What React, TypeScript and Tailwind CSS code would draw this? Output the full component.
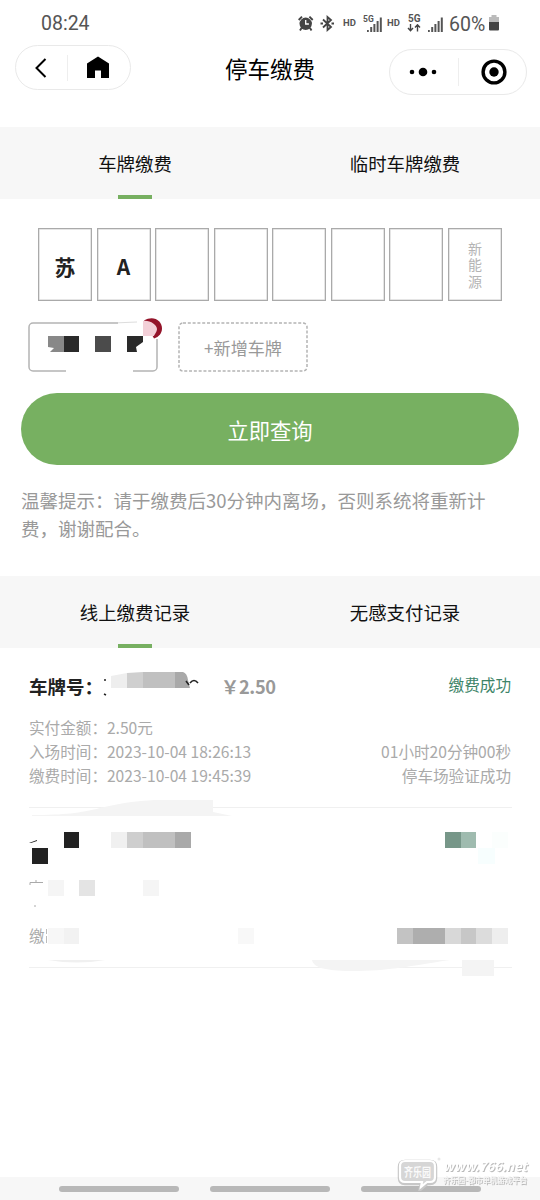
const PLATE = ["苏", "A", "", "", "", "", ""];

interface TabsProps {
  items: string[];
}

function Tabs({ items }: TabsProps) {
  return (
    <div className="flex h-[72px] bg-[#f7f7f7] text-[18.4px] text-[#111]">
      {items.map((label, i) => (
        <div key={label} className="relative flex flex-1 items-center justify-center pt-px">
          {label}
          {i === 0 && <span className="absolute bottom-0 left-[118px] h-[4px] w-[34px] bg-[#77b061]" />}
        </div>
      ))}
    </div>
  );
}

function Signal() {
  return (
    <svg width="15" height="15" viewBox="0 0 15 15" fill="#555">
      <rect x="0" y="13" width="1.8" height="2" />
      <rect x="3.2" y="10" width="2" height="5" />
      <rect x="6.4" y="7" width="2" height="8" />
      <rect x="9.6" y="4" width="2" height="11" />
      <rect x="12.8" y="0.5" width="2" height="14.5" />
    </svg>
  );
}

function StatusBar() {
  return (
    <div className="relative h-[45px] font-[Roboto] text-[#555]">
      <span className="absolute left-[41px] top-[11px] text-[19.5px] leading-[25px]">08:24</span>
      <svg className="absolute left-[298px] top-[15px]" width="16" height="17" viewBox="0 0 16 17">
        <circle cx="7.7" cy="8.800" r="6.2" fill="#444" />
        <path d="M.7 5 4 1.700M11.400 1.700 14.700 5M3.500 13 2 15.500M12 13 13.500 15.500" stroke="#444" strokeWidth="1.900" />
        <path d="M7.700 5v4h3.2" stroke="#fff" strokeWidth="1.3" fill="none" />
      </svg>
      <svg className="absolute left-[320px] top-[15px]" width="15" height="17" viewBox="0 0 15 17" fill="none" stroke="#444" strokeWidth="1.800">
        <path d="M3 4.500 11 12 7.500 15V2L11 5 3 12.500" />
        <path d="M.5 8.500h2.500M11.500 8.500H14" strokeWidth="2" />
      </svg>
      <span className="absolute left-[343px] top-[17px] text-[9.5px] leading-[12px] font-bold">HD</span>
      <span className="absolute left-[363px] top-[14px] text-[8.5px] leading-[10px] font-bold">5G</span>
      <span className="absolute left-[367px] top-[17px]"><Signal /></span>
      <span className="absolute left-[387px] top-[17px] text-[9.5px] leading-[12px] font-bold">HD</span>
      <span className="absolute left-[408px] top-[13px] text-[10px] leading-[12px] font-bold">5G</span>
      <svg className="absolute left-[407px] top-[24px]" width="14" height="8" viewBox="0 0 14 8" fill="none" stroke="#444" strokeWidth="1.4">
        <path d="M3.5 0v6M1 4l2.5 2.700L6 4M10.500 7.500V1M8 3.500l2.500-2.700L13 3.500" />
      </svg>
      <span className="absolute left-[428px] top-[17px]"><Signal /></span>
      <span className="absolute left-[449px] top-[12px] text-[19.500px] leading-[25px]">60%</span>
      <svg className="absolute left-[488px] top-[15px]" width="12" height="16" viewBox="0 0 12 16">
        <path d="M3.500 0h5v2H11v5H1V2h2.500z" fill="#bbb" />
        <path d="M1 7h10v7.500a1 1 0 0 1-1 1H2a1 1 0 0 1-1-1z" fill="#444" />
      </svg>
    </div>
  );
}

function NavBar() {
  return (
    <div className="flex h-[82px] items-start justify-between pl-[15px] pr-[13px]">
      <div className="flex h-[45px] w-[116px] items-center rounded-full border border-[#e9e9e9]">
        <div className="flex h-[26px] w-[52px] items-center justify-center border-r border-[#eee] pr-[2px]">
          <svg width="12" height="20" viewBox="0 0 12 20" fill="none" stroke="#000" strokeWidth="2">
            <path d="M10.500 1 1.500 10l9 9" />
          </svg>
        </div>
        <div className="flex flex-1 justify-center pr-[2px] pb-[2px]">
          <svg width="22" height="22" viewBox="0 0 22 22">
            <path d="M11 .5 22 7.500V22h-8v-7.500H8V22H0V7.500z" />
          </svg>
        </div>
      </div>
      <h1 className="mt-[6px] ml-[20px] text-[22.5px] leading-[34px] text-black">停车缴费</h1>
      <div className="mt-[4px] flex h-[46px] w-[138px] items-center rounded-full border border-[#e9e9e9]">
        <div className="flex h-[28px] w-[69px] items-center justify-center border-r border-[#eee] pr-[2px]">
          <svg width="28" height="10" viewBox="0 0 28 10">
            <circle cx="3" cy="5" r="2.300" />
            <circle cx="14" cy="5" r="4.300" />
            <circle cx="25" cy="5" r="2.300" />
          </svg>
        </div>
        <div className="flex flex-1 justify-center pl-[3px]">
          <svg width="26" height="26" viewBox="0 0 26 26">
            <circle cx="13" cy="13" r="10.900" fill="none" stroke="#000" strokeWidth="3.400" />
            <circle cx="13" cy="13" r="4.700" />
          </svg>
        </div>
      </div>
    </div>
  );
}

// Saved plate with its number blocked out and a delete badge on the corner
function SavedPlate() {
  return (
    <svg className="absolute left-0 top-[-6px]" width="140" height="58" viewBox="28 316 140 58">
      <path d="M118 323H33a4 4 0 0 0-4 4v40a4 4 0 0 0 4 4h33M133 371h20a4 4 0 0 0 4-4v-28" fill="none" stroke="#b4b4b4" strokeWidth="1.500" />
      <path d="M118 322.800 137 322" stroke="#ddd" />
      <path d="M48 336h16v16H50l4-4-6-1z" fill="#888" />
      <path d="M64 336h15v16H64z" fill="#2a2a2a" />
      <path d="M95 336h16v16H95z" fill="#4b4b4b" />
      <path d="M127 336h16v6l-7 5 1 5h-10z" fill="#2a2a2a" />
      <path d="M144 320.500C153 315 162 320 162 328.500C162 333 159 337 154 338.500z" fill="#94142a" />
      <path d="M143 321C150 320 157 325 157 329C157 332 154 335 154 336H143z" fill="#f3d0d8" />
    </svg>
  );
}

function MaskedRecord() {
  return (
    <div className="relative h-[180px]">
      <div className="absolute left-[29px] top-[125px] text-[15.600px] leading-[24px] text-[#aaa]">缴</div>
      <svg className="absolute left-0 top-0" width="540" height="180" viewBox="0 798 540 180">
        <path d="M29 807.500h483M29 967.500h483" stroke="#f0f0f0" />
        <path d="M32 815C65 815 80 813 100 808C125 802 145 800 160 800H213v12L232 816H32z" fill="#f4f4f4" />
        <path d="M29 843 37 840v1l-6 2z" fill="#222" />
        <path d="M64 832h15v16H64zM32 848h16v16H32z" fill="#222" />
        <path d="M111 832h16v16h-16z" fill="#f0f0f0" />
        <path d="M127 832h16v16h-16z" fill="#cecece" />
        <path d="M143 832h32v16h-32z" fill="#c0c0c0" />
        <path d="M175 832h16v16h-16z" fill="#a9a9a9" />
        <path d="M445 832h16v16h-16z" fill="#779789" />
        <path d="M461 832h15v16h-15z" fill="#9fbbaf" />
        <path d="M492 832h16v16h-16z" fill="#fbfefd" />
        <path d="M478 848h17v16h-17z" fill="#f7fefe" />
        <path d="M30 885v-2.500h13M35 881h2M48 881h2M34 906h2" fill="none" stroke="#aaa" />
        <path d="M48 880h16v16H48z" fill="#f5f5f5" />
        <path d="M79 880h16v16H79z" fill="#e4e4e4" />
        <path d="M143 880h16v16h-16z" fill="#f5f5f5" />
        <path d="M46.500 929v5M46.500 936v7" stroke="#bbb" />
        <path d="M48 928h16v16H48z" fill="#f7f7f7" />
        <path d="M64 928h15v16H64z" fill="#f2f2f2" />
        <path d="M238 928h16v16h-16z" fill="#f8f8f8" />
        <path d="M397 928h16v16h-16z" fill="#c3c3c3" />
        <path d="M413 928h32v16h-32z" fill="#aeaeae" />
        <path d="M445 928h16v16h-16z" fill="#d8d8d8" />
        <path d="M461 928h15v16h-15z" fill="#c7c7c7" />
        <path d="M476 928h16v16h-16z" fill="#dcdcdc" />
        <path d="M492 928h16v16h-16z" fill="#eee" />
        <path d="M48 960h57q-28 5-57 0z" fill="#f0f0f0" />
        <path d="M312 960H450C410 966 390 971 350 971C325 971 313 967 312 960zM462 960h32v16h-32z" fill="#f4f4f4" />
      </svg>
    </div>
  );
}

function Watermark() {
  return (
    <div className="absolute bottom-[9px] left-[396px] flex h-[36px] items-center">
      <svg width="46" height="36" viewBox="0 0 46 36">
        <path d="M9 7h25q5 0 5 5v11q0 5-5 5h-3l-6 5 1-5H9q-5 0-5-5V12q0-5 5-5z" fill="none" stroke="#c8c8c8" strokeWidth="4.500" />
        <path d="M9 6h25q5 0 5 5v11q0 5-5 5h-3l-6 5 1-5H9q-5 0-5-5V11q0-5 5-5z" fill="#d6d6d6" stroke="#fff" strokeWidth="2.200" />
        <text x="8" y="21.500" fontSize="12" fontWeight="bold" fill="#fafafa" textLength="27" lengthAdjust="spacingAndGlyphs">齐乐园</text>
        <circle cx="43" cy="4" r="1.500" fill="#e8e8e8" />
      </svg>
      <svg width="92" height="32" viewBox="0 0 92 32" fontWeight="bold" className="drop-shadow-[1px_1px_0.500px_#bbb]">
        <text x="1" y="14" fontSize="13" fontStyle="italic" fill="#fff" textLength="84" lengthAdjust="spacingAndGlyphs">www.766.net</text>
        <text x="1" y="26" fontSize="7.500" fill="#f4f4f4" textLength="84" lengthAdjust="spacingAndGlyphs">齐乐园-都市单机游戏平台</text>
      </svg>
    </div>
  );
}

export default function App() {
  return (
    <div className="relative flex h-[1200px] w-[540px] flex-col overflow-hidden bg-white font-['Noto_Sans_CJK_SC',sans-serif]">
      <StatusBar />
      <NavBar />
      <Tabs items={["车牌缴费", "临时车牌缴费"]} />

      {/* Plate number input */}
      <div className="mt-[29px] flex justify-between px-[38px] text-[21px] font-bold text-[#222]">
        {PLATE.map((char, i) => (
          <div key={i} className="flex h-[73px] w-[54px] items-center justify-center border-[1.5px] border-[#aaa] pt-[5px] shadow-[inset_0_0_0_0.500px_#ccc]">
            {char}
          </div>
        ))}
        <div className="flex h-[73px] w-[54px] flex-col items-center justify-center border-[1.5px] border-[#aaa] text-[14px] leading-[16.5px] font-normal text-[#b4b4b4] shadow-[inset_0_0_0_0.500px_#ccc]">
          <span>新</span>
          <span>能</span>
          <span>源</span>
        </div>
      </div>

      <div className="relative mt-[21px] ml-[28px] flex h-[50px]">
        <SavedPlate />
        <svg className="absolute left-[150px] top-0" width="130" height="50" viewBox="0 0 130 50">
          <rect x="1" y="1" width="128" height="48" rx="4" fill="none" stroke="#b4b4b4" strokeWidth="1.500" strokeDasharray="3 1.800" />
        </svg>
        <div className="ml-[150px] flex w-[130px] items-center justify-center pt-[2px] text-[17.100px] text-[#999]">
          +新增车牌
        </div>
      </div>

      <button className="mx-[21px] mt-[21px] h-[72px] shrink-0 rounded-full bg-[#77b061] pt-px text-[21.300px] text-white">
        立即查询
      </button>
      <p className="mt-[21px] h-[90px] pl-[21px] text-[18.500px] leading-[28px] whitespace-nowrap text-[#999]">
        温馨提示：请于缴费后30分钟内离场，否则系统将重新计
        <br />
        费，谢谢配合。
      </p>

      <Tabs items={["线上缴费记录", "无感支付记录"]} />

      {/* Latest record */}
      <div className="h-[150px] px-[29px] pt-[23px]">
        <div className="relative flex h-[30px] items-center leading-[30px]">
          <b className="text-[18.500px] font-bold text-[#222]">车牌号：</b>
          <svg className="absolute left-[73px] top-0" width="100" height="30" viewBox="102 671 100 30">
            <path d="M104 680h2M104 694l2 1" stroke="#222" strokeWidth="1.500" />
            <path d="M111 676 127 673v15h-16z" fill="#eee" />
            <path d="M127 673 143 672v16h-16z" fill="#cfcfcf" />
            <path d="M143 672h32v16h-32z" fill="#c0c0c0" />
            <path d="M175 672h8q4 1 5 8l2 8h-15z" fill="#a9a9a9" />
            <path d="M186 681l3 4M190 683q4-5 8 0" fill="none" stroke="#222" strokeWidth="1.600" />
          </svg>
          <span className="absolute left-[192px] text-[18.200px] font-bold tracking-[-0.3px] text-[#999]">￥2.50</span>
          <span className="absolute right-0 top-[-2px] text-[15.600px] text-[#3d8468]">缴费成功</span>
        </div>
        <div className="mt-[14px] text-[15.600px] leading-[24px] text-[#aaa]">
          <p>实付金额：2.50元</p>
          <p className="flex justify-between">
            <span>入场时间：2023-10-04 18:26:13</span>
            <span>01小时20分钟00秒</span>
          </p>
          <p className="flex justify-between">
            <span>缴费时间：2023-10-04 19:45:39</span>
            <span>停车场验证成功</span>
          </p>
        </div>
      </div>
      <MaskedRecord />

      {/* System gesture bar */}
      <div className="mt-auto flex h-[23px] items-start gap-[31px] bg-[#f7f7f7] pt-[9px] pl-[59px]">
        <span className="h-[6px] w-[120px] rounded-full bg-[#b8b8b8]" />
        <span className="h-[6px] w-[120px] rounded-full bg-[#b8b8b8]" />
        <span className="h-[6px] w-[120px] rounded-full bg-[#b8b8b8]" />
      </div>
      <Watermark />
    </div>
  );
}
